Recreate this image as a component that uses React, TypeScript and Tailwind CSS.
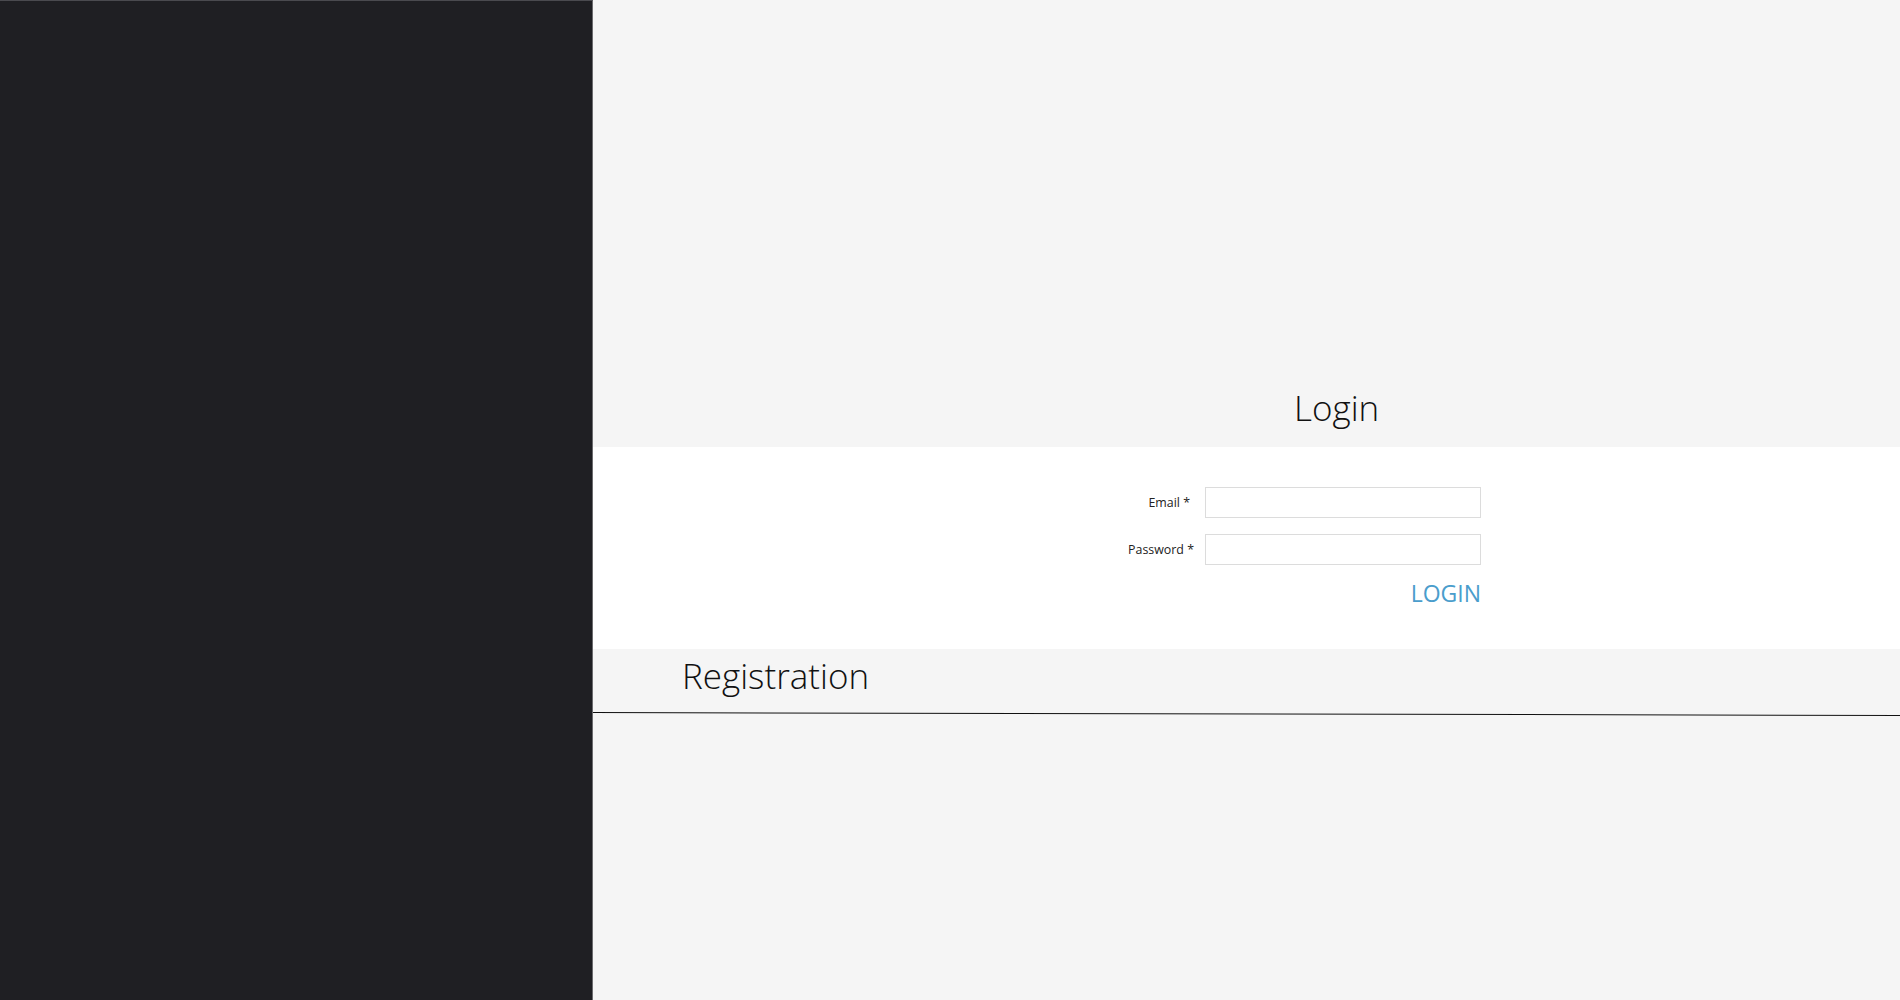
import React from "react";

export default function App() {
  return (
    <div className="flex h-[1000px] w-[1900px] overflow-hidden bg-[#f5f5f5] font-['Open_Sans',sans-serif]">
      <aside className="h-full w-[593px] shrink-0 border-r border-r-[#6b6b6e] border-t border-t-[#4a4a4f] bg-[#1f1f23]" />

      <main className="flex flex-1 flex-col">
        <div className="flex h-[447px] items-end pb-[17px] pl-[701px]">
          <h1 className="text-[35px] font-light leading-[44px] text-[#111]">Login</h1>
        </div>

        <div className="h-[202px] bg-white pt-[40px]">
          <form className="grid grid-cols-[601px_276px] gap-x-[11px] gap-y-[16px]" onSubmit={(e) => e.preventDefault()}>
            <label className="flex items-center justify-end pr-[4px] pt-[2px] text-[12.4px] text-[#222]">Email *</label>
            <input type="email" className="h-[31px] border border-[#dcdcdc] bg-white px-2 text-sm outline-none" />
            <label className="flex items-center justify-end pt-[2px] text-[12.4px] text-[#222]">Password *</label>
            <input type="password" className="h-[31px] border border-[#dcdcdc] bg-white px-2 text-sm outline-none" />
            <div />
            <div className="-mt-[3px] flex justify-end">
              <button type="submit" className="text-[23px] leading-[30px] text-[#4a9dcc]">LOGIN</button>
            </div>
          </form>
        </div>

        <div className="flex h-[63px] items-end pb-[10px] pl-[89px]">
          <h2 className="text-[35px] font-light leading-[52px] text-[#111]">Registration</h2>
        </div>
        <div className="h-px w-full origin-left rotate-[0.13deg] bg-[#111]" />
      </main>
    </div>
  );
}
